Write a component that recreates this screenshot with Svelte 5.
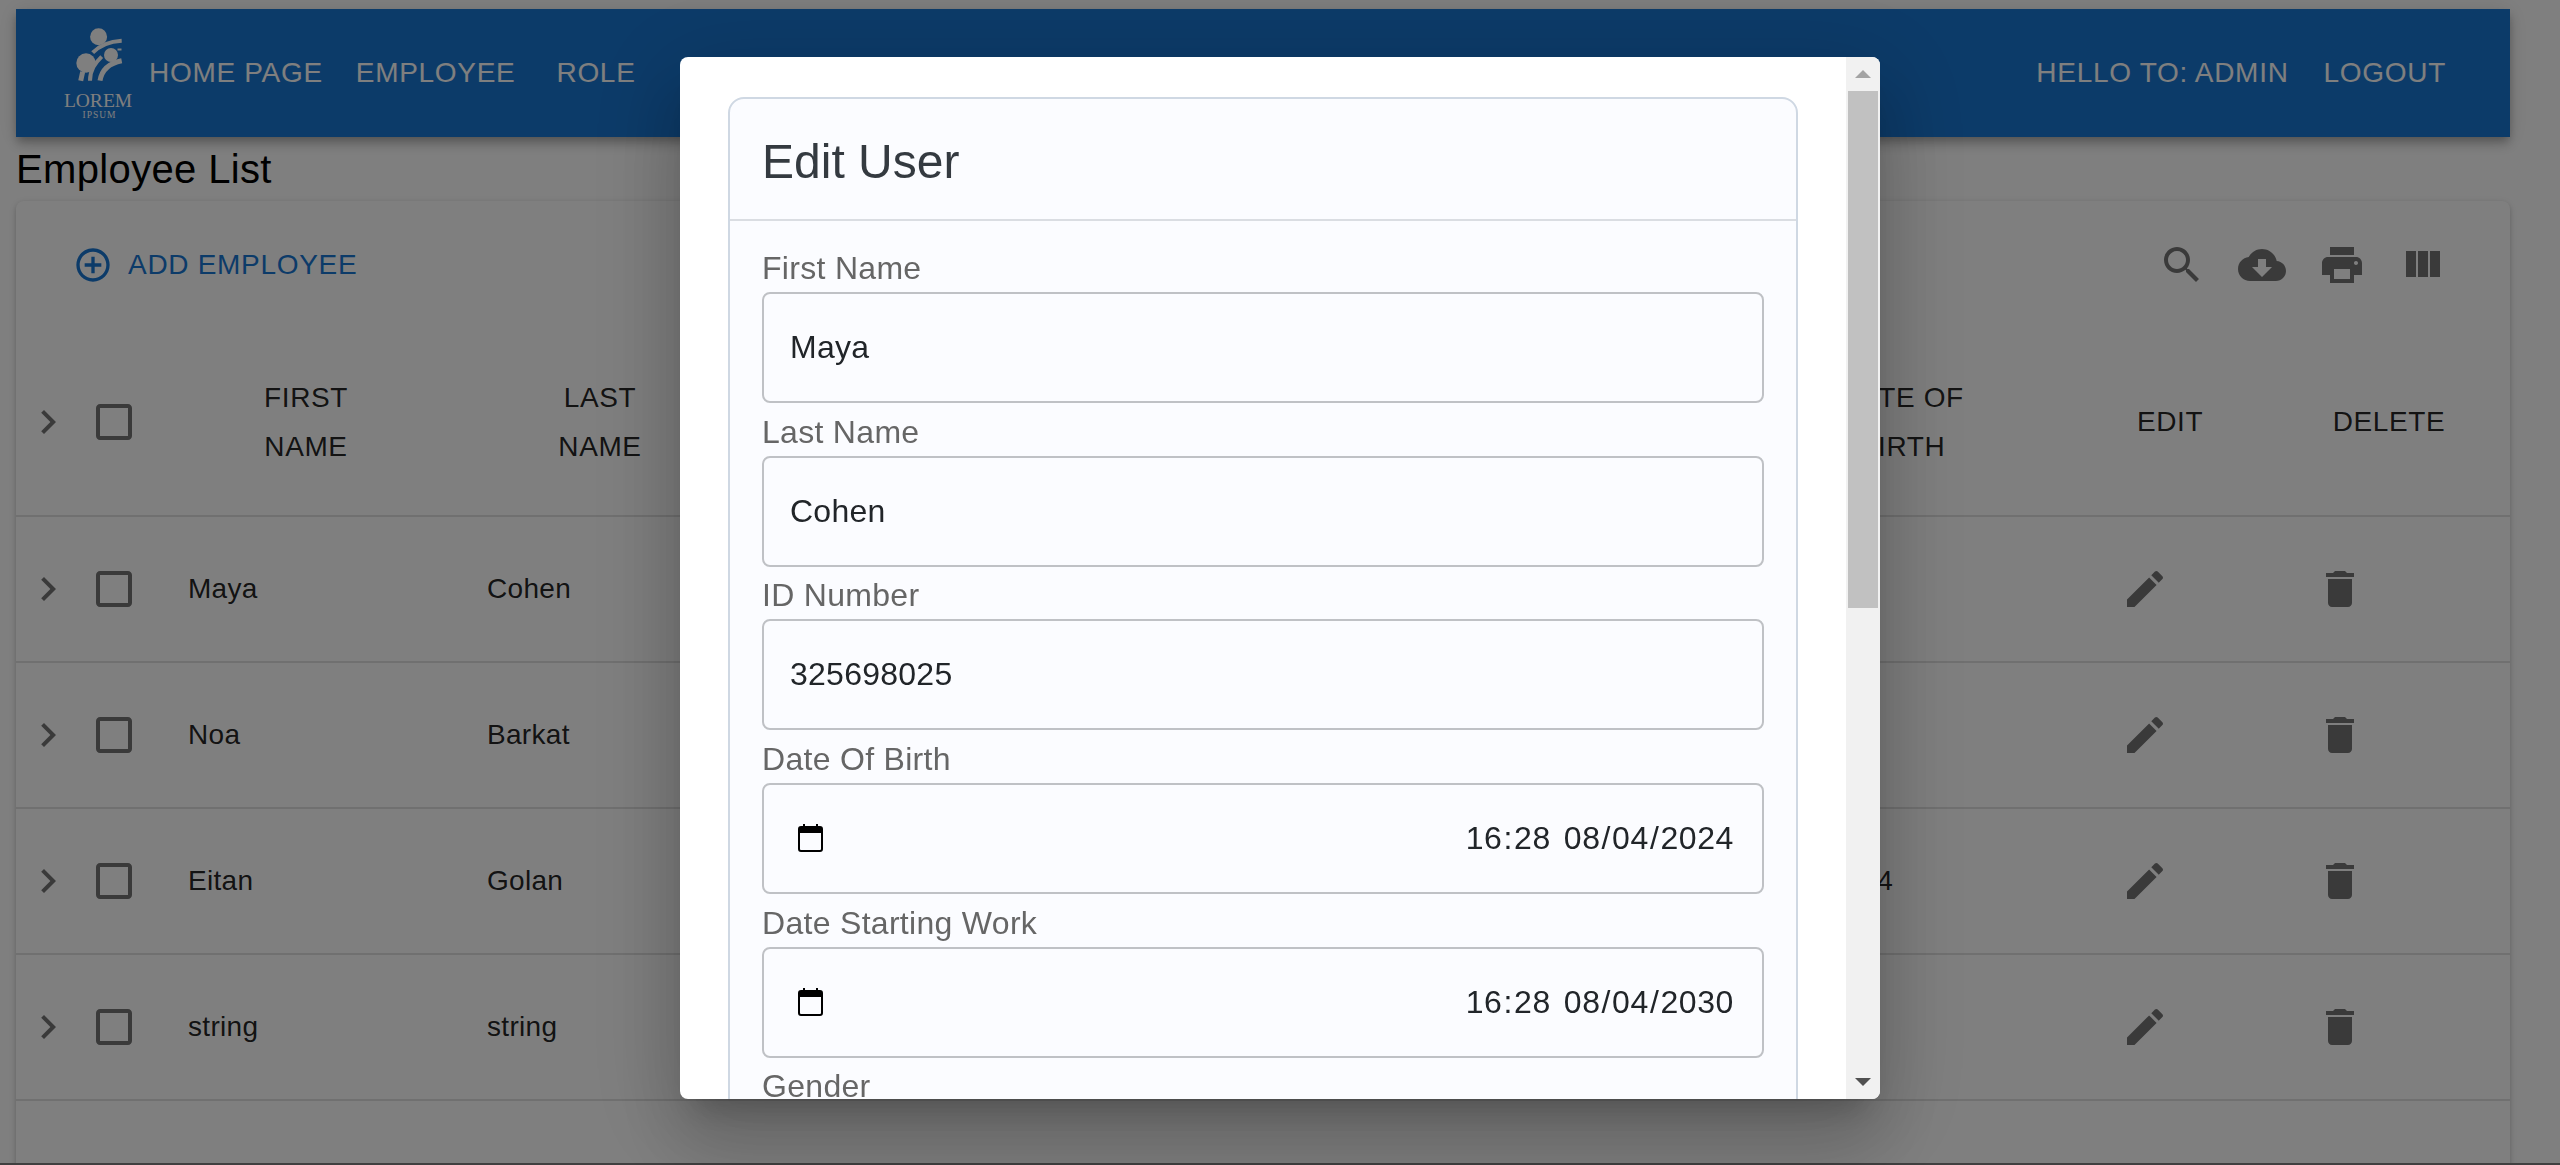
<script>
  const rows = [
    { first: 'Maya', last: 'Cohen', dob: '' },
    { first: 'Noa', last: 'Barkat', dob: '' },
    { first: 'Eitan', last: 'Golan', dob: '08/04/2024' },
    { first: 'string', last: 'string', dob: '' }
  ];

  const textFields = [
    { label: 'First Name', value: 'Maya' },
    { label: 'Last Name', value: 'Cohen' },
    { label: 'ID Number', value: '325698025' }
  ];

  const dateFields = [
    { label: 'Date Of Birth', time: ['16', '28'], date: ['08', '04', '2024'] },
    { label: 'Date Starting Work', time: ['16', '28'], date: ['08', '04', '2030'] }
  ];

  const icons = {
    search: 'M15.5 14h-.79l-.28-.27C15.41 12.59 16 11.11 16 9.5 16 5.91 13.09 3 9.5 3S3 5.91 3 9.5 5.91 16 9.5 16c1.61 0 3.09-.59 4.23-1.57l.27.28v.79l5 4.99L20.49 19l-4.99-5zm-6 0C7.01 14 5 11.99 5 9.5S7.01 5 9.5 5 14 7.01 14 9.5 11.99 14 9.5 14z',
    download: 'M19.35 10.04C18.67 6.59 15.64 4 12 4 9.11 4 6.6 5.64 5.35 8.04 2.34 8.36 0 10.91 0 14c0 3.31 2.69 6 6 6h13c2.76 0 5-2.24 5-5 0-2.64-2.05-4.78-4.65-4.96zM17 13l-5 5-5-5h3V9h4v4h3z',
    print: 'M19 8H5c-1.66 0-3 1.34-3 3v6h4v4h12v-4h4v-6c0-1.66-1.34-3-3-3zm-3 11H8v-5h8v5zm3-7c-.55 0-1-.45-1-1s.45-1 1-1 1 .45 1 1-.45 1-1 1zm-1-9H6v4h12V3z',
    columns: 'M10 18h5V5h-5v13zm-6 0h5V5H4v13zM16 5v13h5V5h-5z',
    add: 'M13 7h-2v4H7v2h4v4h2v-4h4v-2h-4V7zm-1-5C6.48 2 2 6.48 2 12s4.48 10 10 10 10-4.48 10-10S17.52 2 12 2zm0 18c-4.41 0-8-3.59-8-8s3.59-8 8-8 8 3.59 8 8-3.59 8-8 8z',
    chevron: 'M8.59 16.59L13.17 12 8.59 7.41 10 6l6 6-6 6-1.41-1.41z',
    checkbox: 'M19 5v14H5V5h14m0-2H5c-1.1 0-2 .9-2 2v14c0 1.1.9 2 2 2h14c1.1 0 2-.9 2-2V5c0-1.1-.9-2-2-2z',
    edit: 'M3 17.25V21h3.75L17.81 9.94l-3.75-3.75L3 17.25zM20.71 7.04c.39-.39.39-1.02 0-1.41l-2.34-2.34c-.39-.39-1.02-.39-1.41 0l-1.83 1.83 3.75 3.75 1.83-1.83z',
    trash: 'M6 19c0 1.1.9 2 2 2h8c1.1 0 2-.9 2-2V7H6v12zM19 4h-3.5l-1-1h-5l-1 1H5v2h14V4z'
  };
</script>

{#snippet icon(d)}
  <svg class="icon" viewBox="0 0 24 24" aria-hidden="true"><path {d} /></svg>
{/snippet}

<div class="page">
  <header class="appbar">
    <svg class="logo" viewBox="0 0 70 96" aria-label="Lorem Ipsum logo">
      <circle cx="35.6" cy="11.7" r="8.5" />
      <circle cx="23" cy="38" r="9.7" />
      <circle cx="48" cy="30" r="7" />
      <g class="limbs">
        <path d="M29.7 27.7Q40.3 16.7 58.7 15.7" stroke-width="4" />
        <path d="M17.7 55.7L19.7 46.7" stroke-width="5" />
        <path d="M27 55.7C27 45 32 38.3 38.7 31.7" stroke-width="4" />
        <path d="M37 55.7C38.7 45 45.3 38.3 58.7 35.7" stroke-width="5" />
        <path d="M54.5 24.5H58.5" stroke-width="2" />
      </g>
      <text x="35" y="82" class="logo-main">LOREM</text>
      <text x="36.5" y="93" class="logo-sub">IPSUM</text>
    </svg>
    <nav class="nav">
      <span>HOME PAGE</span>
      <span class="employee">EMPLOYEE</span>
      <span class="role">ROLE</span>
    </nav>
    <div class="account">
      <span>HELLO TO: ADMIN</span>
      <span>LOGOUT</span>
    </div>
  </header>

  <h1 class="title">Employee List</h1>

  <section class="paper">
    <div class="toolbar">
      <div class="add">
        {@render icon(icons.add)}
        <span>ADD EMPLOYEE</span>
      </div>
      <div class="tools">
        {@render icon(icons.search)}
        {@render icon(icons.download)}
        {@render icon(icons.print)}
        {@render icon(icons.columns)}
      </div>
    </div>

    <div class="row head">
      <div class="cell center muted">{@render icon(icons.chevron)}</div>
      <div class="cell center muted">{@render icon(icons.checkbox)}</div>
      <div class="cell center"><span>FIRST<br />NAME</span></div>
      <div class="cell center"><span>LAST<br />NAME</span></div>
      <div class="cell"></div>
      <div class="cell center"><span>DATE OF<br />BIRTH</span></div>
      <div class="cell center edit-head"><span>EDIT</span></div>
      <div class="cell center"><span>DELETE</span></div>
    </div>

    {#each rows as row}
      <div class="row body">
        <div class="cell center muted">{@render icon(icons.chevron)}</div>
        <div class="cell center muted">{@render icon(icons.checkbox)}</div>
        <div class="cell first">{row.first}</div>
        <div class="cell last">{row.last}</div>
        <div class="cell"></div>
        <div class="cell dob">{row.dob}</div>
        <div class="cell edit muted">{@render icon(icons.edit)}</div>
        <div class="cell trash muted">{@render icon(icons.trash)}</div>
      </div>
    {/each}
  </section>
</div>

<div class="backdrop">
  <div class="modal">
    <div class="modal-content">
      <div class="card">
        <div class="card-header">Edit User</div>
        <div class="card-body">
          {#each textFields as field}
            <div class="field">
              <label>
                <span class="label">{field.label}</span>
                <input class="control" type="text" value={field.value} readonly />
              </label>
            </div>
          {/each}

          {#each dateFields as field}
            <div class="field">
              <span class="label">{field.label}</span>
              <div class="control date">
                <svg class="calendar" viewBox="0 0 25 28" aria-hidden="true">
                  <rect x="1" y="3" width="23" height="24" rx="2" fill="none" stroke="#000" stroke-width="2" />
                  <rect x="1" y="3" width="23" height="6" fill="#000" />
                  <rect x="5" y="0" width="2" height="4" fill="#000" />
                  <rect x="18" y="0" width="2" height="4" fill="#000" />
                </svg>
                <span class="stamp">
                  <span class="part">
                    {#each field.time as t, i}{#if i}:{/if}<span class="unit">{t}</span>{/each}
                  </span>
                  <span class="part">
                    {#each field.date as d, i}{#if i}/{/if}<span class="unit">{d}</span>{/each}
                  </span>
                </span>
              </div>
            </div>
          {/each}

          <div class="field">
            <span class="label">Gender</span>
            <div class="control"></div>
          </div>
        </div>
      </div>
    </div>

    <div class="scrollbar">
      <div class="arrow-box"><span class="arrow up"></span></div>
      <div class="track"><div class="thumb"></div></div>
      <div class="arrow-box"><span class="arrow down"></span></div>
    </div>
  </div>
</div>

<style>
  :global(body) {
    background: #fff;
    font-family: 'Liberation Sans', Arial, sans-serif;
    overflow: hidden;
  }

  .page {
    box-sizing: border-box;
    height: 1165px;
    padding: 9px 50px 0 16px;
    overflow: hidden;
    border-bottom: 2px solid #808080;
  }

  .appbar {
    display: flex;
    align-items: center;
    height: 128px;
    background: #1976d2;
    color: #fff;
    font-size: 28px;
    letter-spacing: 0.7px;
    box-shadow: 0 4px 8px -2px rgba(0, 0, 0, 0.2), 0 8px 10px 0 rgba(0, 0, 0, 0.14), 0 2px 20px 0 rgba(0, 0, 0, 0.12);
    position: relative;
  }

  .logo {
    width: 70px;
    height: 96px;
    margin-left: 47px;
    fill: #fff;
    flex: none;
  }

  .limbs path {
    fill: none;
    stroke: #fff;
  }

  .logo-main {
    font-family: 'Liberation Serif', serif;
    font-size: 19.5px;
    letter-spacing: 0;
    text-anchor: middle;
  }

  .logo-sub {
    font-family: 'Liberation Serif', serif;
    font-size: 9.5px;
    letter-spacing: 1px;
    text-anchor: middle;
  }

  .nav {
    display: flex;
    margin-left: 16px;
  }

  .employee {
    margin-left: 33px;
  }

  .role {
    margin-left: 41px;
  }

  .account {
    display: flex;
    gap: 35px;
    margin-left: auto;
    padding-right: 64px;
  }

  .title {
    margin: 0;
    height: 64px;
    font-size: 40px;
    font-weight: 400;
    line-height: 64px;
    letter-spacing: 0.35px;
    color: #000;
  }

  .paper {
    height: 1100px;
    background: #fff;
    border-radius: 8px;
    box-shadow: 0 4px 2px -2px rgba(0, 0, 0, 0.2), 0 2px 4px 0 rgba(0, 0, 0, 0.14), 0 2px 10px 0 rgba(0, 0, 0, 0.12);
    color: rgba(0, 0, 0, 0.87);
    font-size: 28px;
  }

  .toolbar {
    display: flex;
    align-items: center;
    justify-content: space-between;
    height: 127px;
    padding: 1px 64px 0 57px;
    box-sizing: border-box;
  }

  .add {
    display: flex;
    align-items: center;
    gap: 15px;
    color: #1976d2;
    letter-spacing: 0.7px;
    fill: #1976d2;
  }

  .add .icon {
    width: 40px;
    height: 40px;
  }

  .tools {
    display: flex;
    gap: 32px;
    fill: rgba(0, 0, 0, 0.54);
  }

  .icon {
    display: block;
    width: 48px;
    height: 48px;
    flex: none;
  }

  .row {
    display: grid;
    grid-template-columns: 64px 68px 316px 272px 980px 372px 180px 242px;
    box-sizing: border-box;
    border-bottom: 2px solid #e0e0e0;
  }

  .head {
    height: 189px;
    line-height: 49px;
    letter-spacing: 0.6px;
  }

  .body {
    height: 146px;
    letter-spacing: 0.3px;
  }

  .cell {
    display: flex;
    align-items: center;
    min-width: 0;
  }

  .center {
    justify-content: center;
    text-align: center;
  }

  .muted {
    fill: rgba(0, 0, 0, 0.54);
  }

  .first {
    padding-left: 40px;
  }

  .last {
    padding-left: 23px;
  }

  .dob {
    padding-left: 34px;
  }

  .edit-head {
    padding-right: 16px;
  }

  .edit {
    padding-left: 33px;
  }

  .trash {
    padding-left: 48px;
  }

  .backdrop {
    position: fixed;
    inset: 0;
    display: flex;
    justify-content: center;
    padding-top: 57px;
    background: rgba(0, 0, 0, 0.5);
  }

  .modal {
    display: flex;
    width: 1200px;
    height: 1042px;
    background: #fff;
    border-radius: 8px;
    overflow: hidden;
    box-shadow: 0 22px 30px -14px rgba(0, 0, 0, 0.2), 0 48px 76px 6px rgba(0, 0, 0, 0.14), 0 18px 92px 16px rgba(0, 0, 0, 0.12);
  }

  .modal-content {
    flex: 1;
    min-width: 0;
    padding: 40px 48px 0;
    overflow: hidden;
  }

  .card {
    border: 2px solid #cfd8e3;
    border-radius: 16px;
    background: #fbfcff;
    color: #212529;
  }

  .card-header {
    display: flex;
    align-items: center;
    box-sizing: border-box;
    height: 122px;
    padding: 5px 32px 0;
    border-bottom: 2px solid #dadde2;
    font-size: 48px;
    color: #343a40;
  }

  .card-body {
    padding: 23px 32px 0;
  }

  .field {
    margin-bottom: 4.67px;
  }

  .label {
    display: block;
    font-size: 32px;
    line-height: 48px;
    letter-spacing: 0.3px;
    color: #666;
  }

  .control {
    display: block;
    box-sizing: border-box;
    width: 100%;
    height: 111px;
    padding: 0 26px;
    border: 2px solid #bfc1c5;
    border-radius: 8px;
    background: transparent;
    font: 32px 'Liberation Sans', Arial, sans-serif;
    letter-spacing: 0.25px;
    color: #212529;
    outline: none;
  }

  .date {
    display: flex;
    align-items: center;
    justify-content: space-between;
    padding: 0 27px 0 34px;
    letter-spacing: 0.6px;
  }

  .calendar {
    width: 25px;
    height: 28px;
    flex: none;
  }

  .stamp {
    display: flex;
    gap: 11px;
  }

  .unit {
    padding: 0 1px;
  }

  .scrollbar {
    display: flex;
    flex-direction: column;
    flex: none;
    width: 34px;
    background: #f1f1f1;
  }

  .arrow-box {
    display: flex;
    align-items: center;
    justify-content: center;
    flex: none;
    height: 34px;
  }

  .arrow {
    width: 0;
    height: 0;
    border-left: 8px solid transparent;
    border-right: 8px solid transparent;
  }

  .arrow.up {
    border-bottom: 8px solid #a3a3a3;
  }

  .arrow.down {
    border-top: 8px solid #505050;
  }

  .track {
    flex: 1;
    padding: 0 2px;
  }

  .thumb {
    height: 517px;
    background: #c1c1c1;
  }
</style>
